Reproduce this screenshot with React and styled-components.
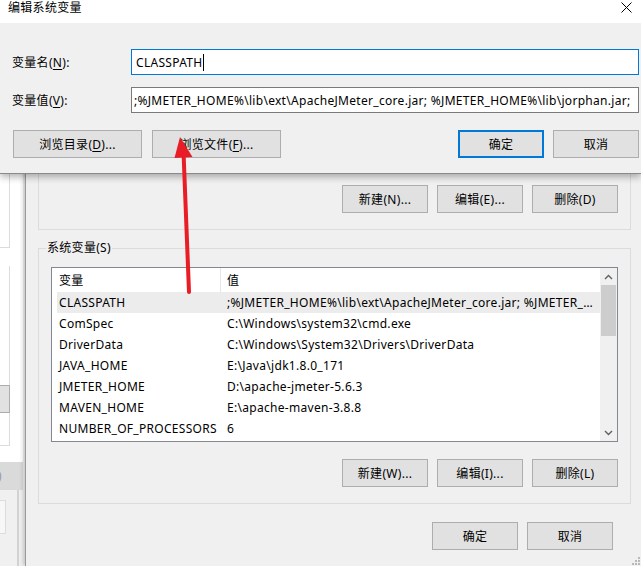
import React from 'react';
import styled, { createGlobalStyle } from 'styled-components';

const ui = `"Noto Sans", "Noto Sans CJK SC", sans-serif`;

const GlobalStyle = createGlobalStyle`
  html, body {
    margin: 0;
    padding: 0;
    overflow: hidden;
    background: #f0f0f0;
  }
  body {
    font-family: ${ui};
    font-size: 12px;
    letter-spacing: 0.3px;
    color: #000;
  }
`;

const rows = [
  ['CLASSPATH', ';%JMETER_HOME%\\lib\\ext\\ApacheJMeter_core.jar; %JMETER_HOME%\\lib\\jorphan.jar; %JMETER_HOME%\\lib\\logkit-2.0.jar;'],
  ['ComSpec', 'C:\\Windows\\system32\\cmd.exe'],
  ['DriverData', 'C:\\Windows\\System32\\Drivers\\DriverData'],
  ['JAVA_HOME', 'E:\\Java\\jdk1.8.0_171'],
  ['JMETER_HOME', 'D:\\apache-jmeter-5.6.3'],
  ['MAVEN_HOME', 'E:\\apache-maven-3.8.8'],
  ['NUMBER_OF_PROCESSORS', '6'],
];

function App() {
  return (
    <>
      <GlobalStyle />
      <Desktop>
        {/* system properties window, mostly hidden */}
        <SysWindow>
          <SysPage>
            <SysGroup $h={248} />
            <SysGroup $h={180} $mt={18}>
              <SysButton />
            </SysGroup>
          </SysPage>
          <SysBand>)</SysBand>
          <SysFooter>
            <SysFooterBox />
          </SysFooter>
        </SysWindow>

        {/* environment variables window */}
        <EnvWindow>
          <Group $h={200} $mt={30}>
            <Filler />
            <ButtonRow>
              <Button>新建(N)...</Button>
              <Button>编辑(E)...</Button>
              <Button>删除(D)</Button>
            </ButtonRow>
          </Group>
          <Group $mt={18} $pt={18}>
            <Legend>系统变量(S)</Legend>
            <ListView>
              <ListBody>
                <ListHeader>
                  <HeaderCell>变量</HeaderCell>
                  <HeaderCell $sep>值</HeaderCell>
                </ListHeader>
                {rows.map(([name, value], i) => (
                  <ListRow key={name} $selected={i === 0}>
                    <NameCell>{name}</NameCell>
                    <ValueCell>{value}</ValueCell>
                  </ListRow>
                ))}
              </ListBody>
              <ScrollBar>
                <ScrollArrow>
                  <svg width="9" height="6" viewBox="0 0 9 6">
                    <polyline points="1,5 4.5,1.5 8,5" fill="none" stroke="#606060" strokeWidth="1.4" />
                  </svg>
                </ScrollArrow>
                <Thumb />
                <Track />
                <ScrollArrow>
                  <svg width="9" height="6" viewBox="0 0 9 6">
                    <polyline points="1,1 4.5,4.5 8,1" fill="none" stroke="#606060" strokeWidth="1.4" />
                  </svg>
                </ScrollArrow>
              </ScrollBar>
            </ListView>
            <ButtonRow $mt={17}>
              <Button>新建(W)...</Button>
              <Button>编辑(I)...</Button>
              <Button>删除(L)</Button>
            </ButtonRow>
          </Group>
          <FooterRow>
            <Button>确定</Button>
            <Button>取消</Button>
          </FooterRow>
          <Grip width="9" height="9" viewBox="0 0 9 9">
            {[[7, 1], [7, 4], [4, 4], [7, 7], [4, 7], [1, 7]].map(([x, y]) => (
              <rect key={`${x}-${y}`} x={x} y={y} width="2" height="2" fill="#b8b8b8" />
            ))}
          </Grip>
        </EnvWindow>

        {/* edit system variable dialog */}
        <EditDialog>
          <TitleBar>
            <span>编辑系统变量</span>
            <svg width="11" height="11" viewBox="0 0 11 11">
              <path d="M0.5 0.5 L10.5 10.5 M10.5 0.5 L0.5 10.5" stroke="#000" strokeWidth="1" />
            </svg>
          </TitleBar>
          <DialogBody>
            <FieldGrid>
              <FieldLabel>变量名(<u>N</u>):</FieldLabel>
              <TextInput $focused>
                CLASSPATH<Caret />
              </TextInput>
              <FieldLabel>变量值(<u>V</u>):</FieldLabel>
              <TextInput>
                ;%JMETER_HOME%\lib\ext\ApacheJMeter_core.jar; %JMETER_HOME%\lib\jorphan.jar;
              </TextInput>
            </FieldGrid>
            <DialogButtons>
              <ButtonGroup>
                <Button $wide>浏览目录(<u>D</u>)...</Button>
                <Button $wide>浏览文件(<u>F</u>)...</Button>
              </ButtonGroup>
              <ButtonGroup>
                <Button $default>确定</Button>
                <Button>取消</Button>
              </ButtonGroup>
            </DialogButtons>
          </DialogBody>
        </EditDialog>

        <Arrow width="641" height="566" viewBox="0 0 641 566">
          <line x1="189" y1="292" x2="183.5" y2="152" stroke="#e81d25" strokeWidth="4" strokeLinecap="round" />
          <polygon points="180,137 174.5,158 192.5,157" fill="#e81d25" />
        </Arrow>
      </Desktop>
    </>
  );
}

const Desktop = styled.div`
  position: relative;
  width: 641px;
  height: 566px;
  overflow: hidden;
  background: #f0f0f0;
`;

/* ---------- system properties (left strip) ---------- */

const SysWindow = styled.div`
  position: absolute;
  left: -300px;
  top: 0;
  width: 323px;
  height: 566px;
  display: flex;
  flex-direction: column;
  background: #f0f0f0;
`;

const SysPage = styled.div`
  height: 462px;
  background: #fff;
  padding-right: 12px;
  box-sizing: border-box;
`;

const SysGroup = styled.div`
  position: relative;
  height: ${p => p.$h}px;
  margin-top: ${p => p.$mt || 0}px;
  border: 1px solid #dcdcdc;
  border-top: none;
  margin-right: 1px;
  box-sizing: border-box;
`;

const SysButton = styled.div`
  position: absolute;
  right: -1px;
  top: 119px;
  width: 80px;
  height: 28px;
  box-sizing: border-box;
  background: #e1e1e1;
  border: 1px solid #adadad;
`;

const SysBand = styled.div`
  height: 28px;
  background: #dadada;
  color: #9a9a9a;
  font-size: 12px;
  line-height: 28px;
  padding-left: 298px;
`;

const SysFooter = styled.div`
  flex: 1;
  padding-top: 10px;
  border-right: 2px solid #d2d2d2;
  margin-right: 4px;
`;

const SysFooterBox = styled.div`
  width: 306px;
  height: 34px;
  box-sizing: border-box;
  border: 1px solid #dcdcdc;
  background: #f7f7f7;
`;

/* ---------- environment variables window ---------- */

const EnvWindow = styled.div`
  position: absolute;
  left: 25px;
  top: 0;
  width: 616px;
  height: 566px;
  box-sizing: border-box;
  display: flex;
  flex-direction: column;
  padding: 0 10px 0 12px;
  background: #f0f0f0;
  border-left: 1px solid #9a9a9a;
  box-shadow: -2px 0 4px rgba(0, 0, 0, 0.18);
`;

const Group = styled.div`
  position: relative;
  display: flex;
  flex-direction: column;
  box-sizing: border-box;
  height: ${p => (p.$h ? `${p.$h}px` : 'auto')};
  margin-top: ${p => p.$mt || 0}px;
  padding: ${p => p.$pt || 0}px 12px 16px 12px;
  border: 1px solid #dcdcdc;
`;

const Legend = styled.span`
  position: absolute;
  left: 7px;
  top: -9px;
  padding: 0 1px;
  background: #f0f0f0;
  line-height: 16px;
`;

const Filler = styled.div`
  flex: 1;
`;

const ButtonRow = styled.div`
  display: flex;
  justify-content: flex-end;
  gap: 9px;
  margin-top: ${p => p.$mt || 0}px;
`;

const FooterRow = styled.div`
  display: flex;
  justify-content: flex-end;
  gap: 9px;
  margin-top: 18px;
  padding-right: 18px;
`;

const Button = styled.div`
  box-sizing: border-box;
  width: ${p => (p.$wide ? 129 : 86)}px;
  height: 28px;
  display: flex;
  align-items: center;
  justify-content: center;
  background: #e1e1e1;
  border: ${p => (p.$default ? '2px solid #0078d7' : '1px solid #adadad')};
  font-size: 12px;
  white-space: nowrap;

  u {
    text-underline-offset: 2px;
  }
`;

const ListView = styled.div`
  display: flex;
  height: 175px;
  box-sizing: border-box;
  border: 1px solid #828790;
  background: #fff;
`;

const ListBody = styled.div`
  flex: 1;
  min-width: 0;
  overflow: hidden;
`;

const ListHeader = styled.div`
  display: grid;
  grid-template-columns: 168px 1fr;
  height: 24px;
`;

const HeaderCell = styled.div`
  display: flex;
  align-items: center;
  padding-left: ${p => (p.$sep ? 6 : 7)}px;
  border-left: ${p => (p.$sep ? '1px solid #e5e5e5' : 'none')};
`;

const ListRow = styled.div`
  display: grid;
  grid-template-columns: 163px 1fr;
  height: 21px;
  margin-left: 5px;
  align-items: center;
  background: ${p => (p.$selected ? '#ececec' : 'transparent')};
`;

const NameCell = styled.div`
  padding-left: 2px;
  white-space: nowrap;
`;

const ValueCell = styled.div`
  padding-left: 7px;
  padding-right: 4px;
  white-space: nowrap;
  overflow: hidden;
  text-overflow: ellipsis;
`;

const ScrollBar = styled.div`
  width: 17px;
  display: flex;
  flex-direction: column;
  background: #f0f0f0;
`;

const ScrollArrow = styled.div`
  height: 17px;
  display: flex;
  align-items: center;
  justify-content: center;
`;

const Thumb = styled.div`
  height: 51px;
  margin: 0 1px;
  background: #cdcdcd;
`;

const Track = styled.div`
  flex: 1;
`;

const Grip = styled.svg`
  position: absolute;
  right: 1px;
  bottom: 1px;
`;

/* ---------- edit dialog ---------- */

const EditDialog = styled.div`
  position: absolute;
  left: 0;
  top: 0;
  width: 641px;
  height: 174px;
  display: flex;
  flex-direction: column;
  background: #f0f0f0;
  border-bottom: 1px solid #8a8a8a;
  box-shadow: 0 3px 7px rgba(0, 0, 0, 0.3);
  box-sizing: border-box;
`;

const TitleBar = styled.div`
  height: 23px;
  display: flex;
  justify-content: space-between;
  padding: 0 9px 0 8px;
  background: #fff;

  span {
    line-height: 16px;
    font-size: 12px;
  }

  svg {
    margin-top: 2px;
  }
`;

const DialogBody = styled.div`
  flex: 1;
  padding: 26px 2px 0 12px;
`;

const FieldGrid = styled.div`
  display: grid;
  grid-template-columns: 119px 1fr;
  row-gap: 12px;
  align-items: center;
`;

const FieldLabel = styled.div`
  font-size: 12px;

  u {
    text-underline-offset: 2px;
  }
`;

const TextInput = styled.div`
  box-sizing: border-box;
  height: 26px;
  display: flex;
  align-items: center;
  padding-left: ${p => (p.$focused ? 4 : 2)}px;
  background: #fff;
  border: 1px solid ${p => (p.$focused ? '#0078d7' : '#7a7a7a')};
  white-space: nowrap;
  overflow: hidden;
`;

const Caret = styled.span`
  display: inline-block;
  width: 1px;
  height: 17px;
  margin-left: 1px;
  background: #000;
`;

const DialogButtons = styled.div`
  display: flex;
  justify-content: space-between;
  margin-top: 17px;
  padding-left: 1px;
`;

const ButtonGroup = styled.div`
  display: flex;
  gap: 9px;

  &:first-child {
    gap: 10px;
  }
`;

const Arrow = styled.svg`
  position: absolute;
  left: 0;
  top: 0;
  pointer-events: none;
`;

export default App;
